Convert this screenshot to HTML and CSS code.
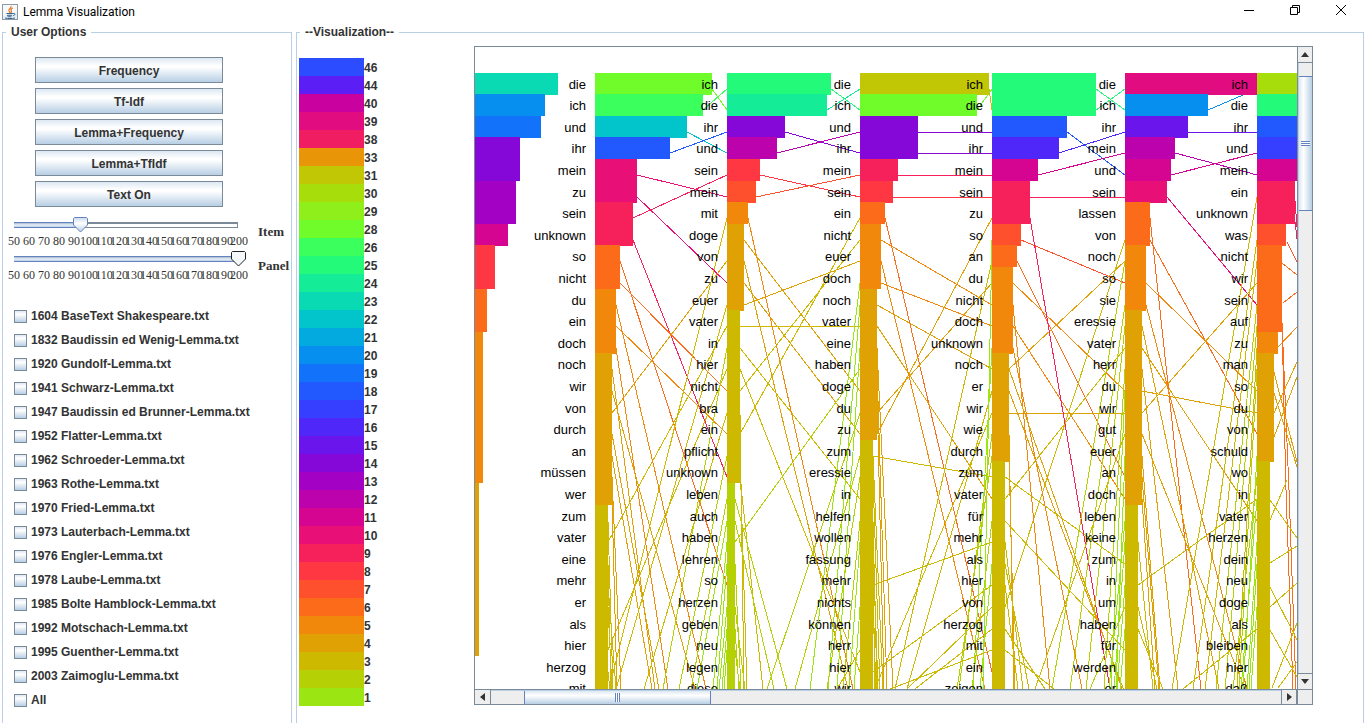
FILE: index.html
```html
<!DOCTYPE html>
<html lang="en">
<head>
<meta charset="utf-8">
<title>Lemma Visualization</title>
<link rel="stylesheet" href="styles.css">
</head>
<body>
<header class="titlebar">
  <svg class="app-icon" width="16" height="16" viewBox="0 0 16 16" aria-hidden="true">
    <rect x=".5" y=".5" width="15" height="15" fill="#e4edf4" stroke="#8d9aa6"/>
    <path d="M1 1h14v7L1 12z" fill="#f6f9fb"/>
    <path d="M9 2c1 2-3 3-2 5 .3.7 1 1 1 2M11 4C8 5 9 6 9.500 7c.3.7-.2 1.300-.8 1.800" fill="none" stroke="#e8761e" stroke-width="1.200"/>
    <path d="M4.500 9.500h6.500M5 11.300h5M5.500 12.800h4M3 14c3 .8 7 .8 10 0M11.200 9.500c2.500-.5 2 1.800 0 2.200" fill="none" stroke="#39658c"/>
  </svg>
  <h1 class="app-title">Lemma Visualization</h1>
  <div class="window-controls">
    <button class="win-btn" type="button" aria-label="Minimize"><svg width="12" height="12"><path d="M1 6.500h10" stroke="#000"/></svg></button>
    <button class="win-btn" type="button" aria-label="Restore"><svg width="12" height="12" fill="none" stroke="#000"><path d="M1.500 3.500h7v7h-7zM3.500 3.500v-2h7v7h-2"/></svg></button>
    <button class="win-btn" type="button" aria-label="Close"><svg width="12" height="12" stroke="#000"><path d="M1 1l10 10M11 1L1 11"/></svg></button>
  </div>
</header>
<main class="workspace">
  <fieldset class="panel options">
    <legend class="panel-title">User Options</legend>
    <div class="actions">
      <button class="action" type="button">Frequency</button>
      <button class="action" type="button">Tf-Idf</button>
      <button class="action" type="button">Lemma+Frequency</button>
      <button class="action" type="button">Lemma+TfIdf</button>
      <button class="action" type="button">Text On</button>
    </div>
    <div class="slider-row">
      <div class="slider">
        <input class="range range-item" id="item" type="range" min="50" max="200" value="94">
        <div class="ticks"></div>
      </div>
      <label class="slider-label" for="item">Item</label>
    </div>
    <div class="slider-row">
      <div class="slider">
        <input class="range range-panel" id="panel" type="range" min="50" max="200" value="200">
        <div class="ticks"></div>
      </div>
      <label class="slider-label" for="panel">Panel</label>
    </div>
    <div class="files">
      <label class="file"><input class="check" type="checkbox">1604 BaseText Shakespeare.txt</label>
      <label class="file"><input class="check" type="checkbox">1832 Baudissin ed Wenig-Lemma.txt</label>
      <label class="file"><input class="check" type="checkbox">1920 Gundolf-Lemma.txt</label>
      <label class="file"><input class="check" type="checkbox">1941 Schwarz-Lemma.txt</label>
      <label class="file"><input class="check" type="checkbox">1947 Baudissin ed Brunner-Lemma.txt</label>
      <label class="file"><input class="check" type="checkbox">1952 Flatter-Lemma.txt</label>
      <label class="file"><input class="check" type="checkbox">1962 Schroeder-Lemma.txt</label>
      <label class="file"><input class="check" type="checkbox">1963 Rothe-Lemma.txt</label>
      <label class="file"><input class="check" type="checkbox">1970 Fried-Lemma.txt</label>
      <label class="file"><input class="check" type="checkbox">1973 Lauterbach-Lemma.txt</label>
      <label class="file"><input class="check" type="checkbox">1976 Engler-Lemma.txt</label>
      <label class="file"><input class="check" type="checkbox">1978 Laube-Lemma.txt</label>
      <label class="file"><input class="check" type="checkbox">1985 Bolte Hamblock-Lemma.txt</label>
      <label class="file"><input class="check" type="checkbox">1992 Motschach-Lemma.txt</label>
      <label class="file"><input class="check" type="checkbox">1995 Guenther-Lemma.txt</label>
      <label class="file"><input class="check" type="checkbox">2003 Zaimoglu-Lemma.txt</label>
      <label class="file"><input class="check" type="checkbox">All</label>
    </div>
  </fieldset>
  <fieldset class="panel visual">
    <legend class="panel-title">--Visualization--</legend>
    <div class="visual-body">
      <ol class="scale" id="scale"></ol>
      <div class="scrollpane">
        <div class="viewport"><svg class="chart" id="chart" role="img" aria-label="Lemma frequency by translation"></svg></div>
        <div class="bar bar-v">
          <button class="arrow" type="button" aria-label="Scroll up"><svg width="8" height="5"><path d="M0 5L4 0l4 5z" fill="#333"/></svg></button>
          <div class="track track-v"><div class="thumb thumb-v"><span class="grip grip-v"></span></div></div>
          <button class="arrow" type="button" aria-label="Scroll down"><svg width="8" height="5"><path d="M0 0h8L4 5z" fill="#333"/></svg></button>
        </div>
        <div class="bar bar-h">
          <button class="arrow" type="button" aria-label="Scroll left"><svg width="5" height="8"><path d="M5 0v8L0 4z" fill="#333"/></svg></button>
          <div class="track track-h"><div class="thumb thumb-h"><span class="grip grip-h"></span></div></div>
          <button class="arrow" type="button" aria-label="Scroll right"><svg width="5" height="8"><path d="M0 0v8l5-4z" fill="#333"/></svg></button>
        </div>
        <div class="corner"></div>
      </div>
    </div>
  </fieldset>
</main>
<script src="chart.js"></script>
</body>
</html>
```
FILE: styles.css
```css
* { box-sizing: border-box; }
body {
  margin: 0;
  height: 100vh;
  display: flex;
  flex-direction: column;
  overflow: hidden;
  background: #fff;
  color: #333;
  font: bold 12px/16px "Liberation Sans", Arial, sans-serif;
}
button { font: inherit; color: inherit; padding: 0; }
.titlebar { flex: none; height: 24px; display: flex; align-items: center; padding: 0 1px 0 2px; }
.app-icon { margin-right: 5px; }
.app-title { margin: 0; color: #000; font: 12px/16px Roboto, "Noto Sans", sans-serif; }
.window-controls { margin-left: auto; display: flex; align-self: flex-start; }
.win-btn { width: 46px; height: 20px; display: grid; place-items: center; border: 0; background: none; }

.workspace { flex: 1; min-height: 0; display: flex; gap: 4px; padding: 0 1px 0 2px; }
.panel { margin: 0; min-width: 0; border: 1px solid #b8cfe5; border-bottom: 0; padding: 0; }
.panel-title { margin-left: 3px; padding: 0 5px; line-height: 16px; }
.options { flex: none; width: 290px; }
.visual { flex: 1; display: flex; flex-direction: column; }

.actions { width: 188px; margin: 17px 0 10px 32px; display: grid; gap: 5px; }
.action {
  height: 26px;
  padding-top: 1px;
  border: 1px solid #7a8a99;
  background: linear-gradient(#dde8f3, #fff 32%, #fff 38%, #b8cfe5);
}
.slider-row { display: flex; height: 34px; }
.slider { width: 239px; margin-left: 4px; }
.range { display: block; appearance: none; -webkit-appearance: none; width: 100%; height: 17px; margin: 0; background: none; }
.range::-webkit-slider-runnable-track { height: 17px; background: linear-gradient(#6382bf 0 1px, #a3b8cc 1px, #e8f0f8 3px, #b8cfe5 5px, #6382bf 5px 6px) 7px 5px / 224px 6px no-repeat; }
.range-item::-webkit-slider-runnable-track {
  background:
    linear-gradient(#6382bf 0 1px, #a3b8cc 1px, #e8f0f8 3px, #b8cfe5 5px, #6382bf 5px 6px) 7px 5px / 66px 6px no-repeat,
    linear-gradient(#7a8a99, #7a8a99) 230px 5px / 1px 6px no-repeat,
    linear-gradient(#7a8a99 0 2px, #fff 2px 5px, #7a8a99 5px 6px) 7px 5px / 224px 6px no-repeat;
}
.range::-webkit-slider-thumb {
  -webkit-appearance: none;
  width: 15px;
  height: 16px;
  background: url("data:image/svg+xml,%3Csvg xmlns='http://www.w3.org/2000/svg' width='15' height='16'%3E%3Cdefs%3E%3ClinearGradient id='g' x2='0' y2='1'%3E%3Cstop stop-color='%23c8daec'/%3E%3Cstop offset='.4' stop-color='%23fff'/%3E%3Cstop offset='1' stop-color='%23b8cfe5'/%3E%3C/linearGradient%3E%3C/defs%3E%3Cpath d='M1.5 .5h12l1 1V8L7.5 15 .5 8V1.500z' fill='url(%23g)' stroke='%236382bf'/%3E%3C/svg%3E");
}
.range-panel::-webkit-slider-thumb {
  background: url("data:image/svg+xml,%3Csvg xmlns='http://www.w3.org/2000/svg' width='15' height='16'%3E%3Cpath d='M1.5 .5h12l1 1V8L7.5 15 .5 8V1.500z' fill='%23f4f8fb' stroke='%23222'/%3E%3C/svg%3E");
}
.ticks { display: flex; justify-content: space-between; padding: 0 7px; font: 12px/14px "Liberation Serif", "Times New Roman", serif; }
.tick { width: 0; display: flex; justify-content: center; }
.slider-label { margin: 7px 0 0 12px; font: bold 13px/16px "Liberation Serif", "Times New Roman", serif; }
.files { margin: 19px 0 0 11px; }
.file { display: flex; align-items: center; gap: 4px; height: 24px; white-space: nowrap; }
.check { appearance: none; -webkit-appearance: none; width: 13px; height: 13px; margin: 0; border: 1px solid #7a8a99; background: linear-gradient(#dde8f3, #fff 30%, #b8cfe5); }

.visual-body { display: flex; height: calc(100vh - 40px); }
.scale { flex: none; list-style: none; margin: 18px 0 0 2px; padding: 0; width: 84px; }
.scale-row { display: flex; height: 18px; line-height: 20px; }
.swatch { width: 65px; }
.scrollpane {
  flex: 1;
  min-width: 0;
  margin: 6px 50px 18px 91px;
  display: grid;
  grid-template: minmax(0, 1fr) 15px / minmax(0, 1fr) 15px;
  border: 1px solid #7a8a99;
}
.viewport { overflow: hidden; }
.chart { display: block; width: 955px; height: 650px; }
.chart line { shape-rendering: crispEdges; stroke-width: 1; }
.chart rect { shape-rendering: crispEdges; }
.chart text { font: 13px "Liberation Sans", Arial, sans-serif; fill: #000; text-anchor: end; }
.bar { display: flex; background: #eee; }
.bar-v { flex-direction: column; border-left: 1px solid #7a8a99; }
.bar-h { border-top: 1px solid #7a8a99; }
.arrow { flex: none; display: grid; place-items: center; border: 0 solid #7a8a99; background: #eee; }
.bar-h .arrow { width: 16px; border-right-width: 1px; }
.bar-h .arrow:last-child { border-left-width: 1px; }
.bar-v .arrow { height: 16px; border-bottom-width: 1px; }
.bar-v .arrow:last-child { border-width: 1px 0 0; }
.track { flex: 1; display: flex; }
.track-v { flex-direction: column; border-left: 1px solid #b8cfe5; padding-top: 13px; }
.track-h { border-top: 1px solid #b8cfe5; padding-left: 33px; }
.thumb { display: grid; place-items: center; border: 1px solid #6382bf; }
.thumb-v { height: 135px; border-width: 1px 0; background: linear-gradient(90deg, #dde8f3, #fff 35%, #b8cfe5); }
.thumb-h { width: 187px; border-width: 0 1px; background: linear-gradient(#dde8f3, #fff 35%, #b8cfe5); }
.grip-v { width: 9px; height: 5px; background: repeating-linear-gradient(#6382bf 0 1px, #fff 1px 2px); }
.grip-h { width: 5px; height: 9px; background: repeating-linear-gradient(90deg, #6382bf 0 1px, #fff 1px 2px); }
.corner { border-top: 1px solid #7a8a99; border-left: 1px solid #7a8a99; background: #eee; }
```
FILE: chart.js
```js
const COLORS = {
  46: '#2b4dff', 44: '#5b1ff5', 40: '#c9019f', 39: '#e10c80', 38: '#f01d62', 33: '#e89608',
  31: '#c2c705', 30: '#a8dd0c', 29: '#8eef1b', 28: '#70fb2a', 26: '#3bff5c', 25: '#24fa7a',
  24: '#14ec98', 23: '#09dab3', 22: '#02c4cb', 21: '#03aadf', 20: '#078fef', 19: '#1273fa',
  18: '#2159ff', 17: '#363fff', 16: '#4f27f8', 15: '#6a15eb', 14: '#8608d9', 13: '#a302c4',
  12: '#bc02ac', 11: '#d50591', 10: '#e81076', 9: '#f6215a', 8: '#ff3742', 7: '#ff502d',
  6: '#fc6b1a', 5: '#f1880c', 4: '#e0a104', 3: '#cdb900', 2: '#b5d105', 1: '#9be512'
};

const scaleList = document.getElementById('scale');
Object.keys(COLORS).map(Number).sort((a, b) => b - a).forEach(value => {
  const row = document.createElement('li');
  row.className = 'scale-row';
  const swatch = document.createElement('span');
  swatch.className = 'swatch';
  swatch.style.background = COLORS[value];
  row.append(swatch, String(value));
  scaleList.append(row);
});

document.querySelectorAll('.ticks').forEach(ticks => {
  for (let v = 50; v <= 200; v += 10) {
    const tick = document.createElement('span');
    tick.className = 'tick';
    tick.textContent = v;
    ticks.append(tick);
  }
});

// runs: [value, number of rows]
const COLUMNS = [
  { words: '', runs: [[23,1],[20,1],[19,1],[14,2],[13,2],[11,1],[8,2],[6,2],[5,7],[4,8],[3,2]] },
  { words: 'die ich und ihr mein zu sein unknown so nicht du ein doch noch wir von durch an müssen wer zum vater eine mehr er als hier herzog mit',
    runs: [[28,1],[26,1],[22,1],[18,1],[10,2],[9,2],[6,2],[5,3],[4,7],[3,9]] },
  { words: 'ich die ihr und sein mein mit doge von zu euer vater in hier nicht bra ein pflicht unknown leben auch haben lehren so herzen geben neu legen diese',
    runs: [[25,1],[24,1],[14,1],[12,1],[8,1],[7,1],[5,1],[4,4],[3,8],[2,10]] },
  { words: 'die ich und ihr mein sein ein nicht euer doch noch vater eine haben doge du zu zum eressie in helfen wollen fassung mehr nichts können herr hier wir',
    runs: [[31,1],[28,1],[14,2],[9,1],[8,1],[6,1],[5,3],[4,7],[3,12]] },
  { words: 'ich die und ihr mein sein zu so an du nicht doch unknown noch er wir wie durch zum vater für mehr als hier von herzog mit ein zeigen',
    runs: [[25,2],[18,1],[16,1],[11,1],[9,2],[7,1],[6,1],[5,4],[4,5],[3,11]] },
  { words: 'die ich ihr mein und sein lassen von noch so sie eressie vater herr du wir gut euer an doch leben keine zum in um haben für werden er',
    runs: [[39,1],[20,1],[15,1],[12,1],[11,1],[10,1],[6,2],[5,3],[4,9],[3,9]] },
  { words: 'ich die ihr und mein ein unknown was nicht wir sein auf zu man so du von schuld wo in vater herzen dein neu doge als bleiben hier daß',
    runs: [[30,1],[25,1],[18,1],[17,1],[11,1],[9,2],[7,1],[6,4],[5,1],[4,5],[3,11]] }
];

// Links to rows below the visible area. down: [source row, x at the lower edge];
// up: [target row, x at the lower edge, value].
const LOWER = 642;
const DOWN = {
  1: [[10,231],[12,193],[13,180],[14,220],[16,184],[17,177],[18,146],[19,142],[20,138],[22,136],[23,141],[24,137],[27,135]],
  2: [[6,378],[8,373],[15,269],[17,272],[18,288],[19,312],[20,299],[22,266],[24,270],[25,264],[26,265]],
  3: [[8,510],[12,418],[13,412],[14,409],[17,408],[18,405],[20,402],[21,403],[22,400],[24,401]],
  4: [[6,635],[10,575],[12,607],[13,647],[16,539],[17,540],[21,548],[22,554],[23,543],[25,570],[26,579]],
  5: [[6,726],[10,772],[11,744],[13,703],[16,770],[17,685],[18,684],[19,680],[21,678],[24,682],[25,688]]
};
const UP = {
  1: [[10,141,3],[12,188,2],[15,169,3],[17,204,2],[19,216,2],[20,222,1],[21,238,1],[22,242,1],[24,244,1],[25,247,1],[26,249,1]],
  2: [[9,335,1],[10,353,1],[12,362,1],[15,292,2],[17,320,2],[18,352,2],[20,368,2],[21,374,1],[24,379,1],[26,362,3]],
  3: [[8,420,3],[14,432,3],[7,508,1],[12,498,1],[16,484,2],[17,482,2],[20,497,2],[22,505,1],[24,432,3],[25,440,3],[26,415,3]],
  4: [[8,577,2],[10,595,2],[11,611,2],[13,629,2],[14,636,1],[16,560,3],[17,641,1],[20,634,1],[21,639,1],[23,642,1],[24,615,2],[25,645,1]],
  5: [[5,697,3],[7,718,3],[8,730,3],[10,741,2],[11,750,2],[12,762,3],[13,764,2],[17,768,1],[18,758,2],[19,766,1],[21,772,1],[22,774,1],[24,776,1],[25,708,3]]
};
// Links of the last column, which leave the visible area at its right edge.
const EDGE = [
  [820,154,822,180,9],[820,175,823,200,9],[812,195,822,215,7],[807,216,822,228,6],[808,256,822,245,6],
  [803,300,822,280,5],[807,275,811,443,6],[811,443,818,642,6],[808,300,814,443,6],[814,443,821,642,6],
  [799,325,822,415,4],[799,346,822,420,4],[799,366,822,315,4],[799,390,822,330,4],[795,453,822,491,3],
  [795,473,812,433,3],[795,516,822,499,3],[795,560,822,536,3],[795,540,822,593,3],[795,583,822,630,3],
  [797,641,822,576,3],[803,641,822,615,3]
];

const svg = document.getElementById('chart');
const add = (tag, attrs, text) => {
  const el = document.createElementNS('http://www.w3.org/2000/svg', tag);
  for (const key in attrs) el.setAttribute(key, attrs[key]);
  if (text) el.textContent = text;
  svg.append(el);
};
const colX = c => Math.round(c * 132.5 - 12.6);
const rowY = r => Math.floor(26 + r * 21.6);
const size = v => Math.round(v * 4.17);
const link = (x1, y1, x2, y2, v) => add('line', { x1, y1, x2, y2, stroke: COLORS[v] });

const columns = COLUMNS.map(c => ({
  words: c.words ? c.words.split(' ') : [],
  values: c.runs.flatMap(([value, count]) => Array(count).fill(value))
}));

columns.forEach((col, c) => {
  const next = columns[c + 1];
  const start = r => colX(c) + size(col.values[r]);
  if (next) {
    col.words.forEach((word, r) => {
      const target = next.words.indexOf(word);
      if (target >= 0) link(start(r), rowY(r) + 16, colX(c + 1), rowY(target) + 16, col.values[r]);
    });
  }
  (DOWN[c] || []).forEach(([r, x]) => link(start(r), rowY(r) + 16, x, LOWER, col.values[r]));
  (UP[c] || []).forEach(([r, x, v]) => link(x, LOWER, colX(c + 1), rowY(r) + 16, v));
});
EDGE.forEach(args => link(...args));

columns.forEach((col, c) => col.values.forEach((v, r) =>
  add('rect', { x: colX(c), y: rowY(r), width: size(v), height: 22, fill: COLORS[v] })));

columns.forEach((col, c) => col.words.forEach((word, r) =>
  add('text', { x: colX(c) - 9, y: rowY(r) + 16 }, word)));
```
